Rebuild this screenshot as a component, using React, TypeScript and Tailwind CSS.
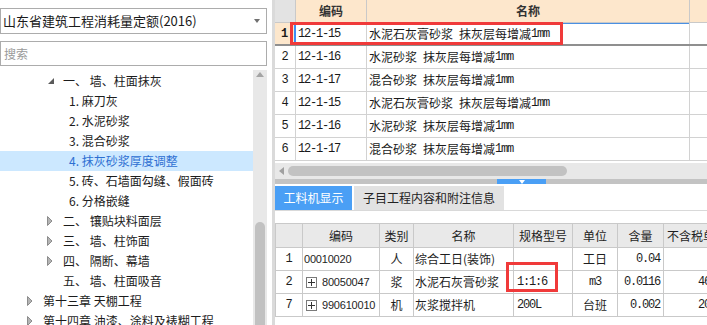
import React from 'react';

const CJK = "font-['Noto_Sans_CJK_SC',sans-serif]";
const MONO = "font-['Liberation_Mono','Noto_Sans_CJK_SC',monospace] text-[12px] tracking-[-1.2px]";

type TreeNode = { label: string; level: 0 | 1 | 2; caret?: 'open' | 'closed'; selected?: boolean };

const tree: TreeNode[] = [
  { label: '一、 墙、柱面抹灰', level: 1, caret: 'open' },
  { label: '1. 麻刀灰', level: 2 },
  { label: '2. 水泥砂浆', level: 2 },
  { label: '3. 混合砂浆', level: 2 },
  { label: '4. 抹灰砂浆厚度调整', level: 2, selected: true },
  { label: '5. 砖、石墙面勾缝、假面砖', level: 2 },
  { label: '6. 分格嵌缝', level: 2 },
  { label: '二、 镶贴块料面层', level: 1, caret: 'closed' },
  { label: '三、 墙、柱饰面', level: 1, caret: 'closed' },
  { label: '四、 隔断、幕墙', level: 1, caret: 'closed' },
  { label: '五、 墙、柱面吸音', level: 1 },
  { label: '第十三章 天棚工程', level: 0, caret: 'closed' },
  { label: '第十四章 油漆、涂料及裱糊工程', level: 0, caret: 'closed' },
];

const indent = ['pl-[29px]', 'pl-[49px]', 'pl-[69px]'];

const quotaRows = [
  { no: '1', code: '12-1-15', name: '水泥石灰膏砂浆', active: true },
  { no: '2', code: '12-1-16', name: '水泥砂浆' },
  { no: '3', code: '12-1-17', name: '混合砂浆' },
  { no: '4', code: '12-1-15', name: '水泥石灰膏砂浆' },
  { no: '5', code: '12-1-16', name: '水泥砂浆' },
  { no: '6', code: '12-1-17', name: '混合砂浆' },
];

const materialRows = [
  { no: '1', code: '00010020', expand: false, kind: '人', name: '综合工日(装饰)', spec: '', unit: '工日', mono: false, qty: '0.04', price: '' },
  { no: '2', code: '80050047', expand: true, kind: '浆', name: '水泥石灰膏砂浆', spec: '1:1:6', unit: 'm3', mono: true, qty: '0.0116', price: '46.80' },
  { no: '7', code: '990610010', expand: true, kind: '机', name: '灰浆搅拌机', spec: '200L', unit: '台班', mono: false, qty: '0.002', price: '20.16' },
];

function Caret({ kind }: { kind?: 'open' | 'closed' }) {
  return (
    <span className="w-[14px] h-full flex items-center shrink-0">
      {kind === 'open' && (
        <svg width="6" height="6" viewBox="0 0 6 6" className="-ml-px">
          <path d="M6 0V6H0Z" fill="#5a5a5a" />
        </svg>
      )}
      {kind === 'closed' && (
        <svg width="6" height="10" viewBox="0 0 6 10" className="-ml-[2px]">
          <path d="M0.5 0.5L5 5L0.5 9.5Z" fill="#b4b4b4" stroke="#8c8c8c" strokeWidth="1" />
        </svg>
      )}
    </span>
  );
}

function LeftPanel() {
  return (
    <div className={`w-[267px] h-full flex flex-col pt-[8px] shrink-0 ${CJK}`}>
      <div className="h-[26px] border border-[#acacac] flex items-center justify-between pl-[2px] pr-[6px] text-[13px] text-[#1a1a1a]">
        <span>山东省建筑工程消耗量定额(2016)</span>
        <svg width="6" height="4" viewBox="0 0 6 4">
          <path d="M0 0H6L3 4Z" fill="#707070" />
        </svg>
      </div>
      <div className="mt-[7px] h-[25px] border border-[#acacac] flex items-center pl-[3px] text-[12px] text-[#9a9a9a]">
        搜索
      </div>
      <div className="mt-[4px] flex-1 flex min-h-0">
        <div className="flex-1 pt-px overflow-hidden">
          {tree.map((n) => (
            <div
              key={n.label}
              className={`h-[20px] flex items-center text-[12px] leading-none ${indent[n.level]} ${
                n.selected ? 'bg-[#cce8ff] text-[#2d6fd2]' : 'text-[#1c1c1c]'
              }`}
            >
              {n.level < 2 && <Caret kind={n.caret} />}
              <span className="whitespace-nowrap">{n.label}</span>
            </div>
          ))}
        </div>
        <div className="w-[14px] bg-[#e8e8e8] flex flex-col items-center">
          <svg width="8" height="5" viewBox="0 0 8 5" className="mt-[2px]">
            <path d="M0 5L4 0L8 5Z" fill="#a4a4a4" />
          </svg>
          <div className="mt-auto w-[10px] h-[103px] bg-[#c1c1c1] rounded-t-[5px]" />
        </div>
      </div>
    </div>
  );
}

function QuotaTable() {
  return (
    <div className={`${CJK} text-[12px] text-[#1a1a1a]`}>
      <div className="h-[23px] flex border-b border-[#c9c9c9] font-bold text-[#333]">
        <div className="w-[21px] shrink-0 bg-[#e3e3e3] border-r border-[#c9c9c9]" />
        <div className="w-[71px] shrink-0 bg-[#fde7cc] border-r border-[#c9c9c9] flex items-center justify-center">编码</div>
        <div className="w-[323px] shrink-0 bg-[#fde7cc] border-r border-[#c9c9c9] flex items-center justify-center">名称</div>
        <div className="flex-1 bg-[#fde7cc]" />
      </div>
      {quotaRows.map((r) => (
        <div
          key={r.no}
          className={`flex ${r.active ? 'h-[23px] border-b-2 border-[#8f8f8f]' : 'h-[23px] border-b border-[#d2d2d2]'}`}
        >
          <div
            className={`w-[21px] shrink-0 border-r border-[#d2d2d2] flex items-center justify-center font-['Liberation_Mono',monospace] text-[12px] ${
              r.active ? 'bg-[#fde7cc] font-bold border-r-[#3d8ef5] border-r-2' : ''
            }`}
          >
            {r.no}
          </div>
          <div
            className={`w-[71px] shrink-0 border-r border-[#d2d2d2] flex items-center pl-[2px] ${r.active ? 'shadow-[inset_0_1px_0_#4a90e2]' : ''}`}
          >
            <span className={MONO}>{r.code}</span>
          </div>
          <div
            className={`w-[323px] shrink-0 border-r border-[#d2d2d2] flex items-center pl-[2px] whitespace-nowrap ${
              r.active ? 'shadow-[inset_0_1px_0_#4a90e2]' : ''
            }`}
          >
            <span>{r.name}</span>
            <span className="w-[6px]" />
            <span>抹灰层每增减</span>
            <span className={MONO}>1mm</span>
          </div>
          <div className="flex-1" />
        </div>
      ))}
      <div className="h-[2px]" />
      <div className="h-[16px] bg-[#e8e8e8] flex items-center">
        <svg width="5" height="8" viewBox="0 0 5 8" className="ml-[4px]">
          <path d="M5 0V8L0 4Z" fill="#a0a0a0" />
        </svg>
        <div className="ml-[4px] w-[279px] h-[10px] rounded-full bg-[#c2c2c2]" />
      </div>
    </div>
  );
}

function MaterialTable() {
  const cell = 'shrink-0 border-r border-b border-[#c9c9c9] flex items-center';
  return (
    <div className={`border-t border-l border-[#c9c9c9] ${CJK} text-[12px] text-[#1e1e1e]`}>
      <div className="h-[24px] flex bg-[#e9e9e9]">
        <div className={`w-[27px] ${cell}`} />
        <div className={`w-[77px] ${cell} justify-center`}>编码</div>
        <div className={`w-[34px] ${cell} justify-center`}>类别</div>
        <div className={`w-[100px] ${cell} justify-center`}>名称</div>
        <div className={`w-[59px] ${cell} justify-center`}>规格型号</div>
        <div className={`w-[45px] ${cell} justify-center`}>单位</div>
        <div className={`w-[46px] ${cell} justify-center`}>含量</div>
        <div className={`w-[90px] ${cell} pl-[3px] whitespace-nowrap`}>不含税单价</div>
      </div>
      {materialRows.map((r) => (
        <div key={r.no} className="h-[23px] flex bg-white">
          <div className={`w-[27px] ${cell} justify-center font-['Liberation_Mono',monospace] text-[12px]`}>{r.no}</div>
          <div
            className={`w-[77px] ${cell} whitespace-nowrap font-['Liberation_Sans',sans-serif] text-[11px] tracking-[-0.2px] ${
              r.expand ? 'pl-[3px]' : 'pl-px'
            }`}
          >
            {r.expand && (
              <span className="w-[11px] h-[11px] border border-[#7a7a7a] flex items-center justify-center mr-[5px] shrink-0">
                <svg width="7" height="7" viewBox="0 0 7 7">
                  <path d="M0 3.5H7M3.5 0V7" stroke="#333" strokeWidth="1" />
                </svg>
              </span>
            )}
            {r.code}
          </div>
          <div className={`w-[34px] ${cell} justify-center`}>{r.kind}</div>
          <div className={`w-[100px] ${cell} pl-px whitespace-nowrap overflow-hidden`}>{r.name}</div>
          <div className={`w-[59px] ${cell} pl-[3px]`}>
            <span className={MONO}>{r.spec}</span>
          </div>
          <div className={`w-[45px] ${cell} justify-center`}>
            <span className={r.mono ? MONO : ''}>{r.unit}</span>
          </div>
          <div className={`w-[46px] ${cell} justify-end pr-[3px]`}>
            <span className={MONO}>{r.qty}</span>
          </div>
          <div className={`w-[90px] ${cell} pl-[34px] whitespace-nowrap`}>
            <span className={MONO}>{r.price}</span>
          </div>
        </div>
      ))}
    </div>
  );
}

export default function App() {
  return (
    <div className="w-[707px] h-[325px] overflow-hidden bg-white flex">
      <LeftPanel />
      <div className="w-[5px] shrink-0" />
      <div className="w-[3px] shrink-0 bg-[#dadada]" />
      <div className="flex-1 min-w-0 flex flex-col relative overflow-hidden">
        <QuotaTable />
        <div className="h-[5px] bg-[#c3c3c3] flex pl-[222px] shrink-0">
          <div className="w-[49px] h-full bg-[#4a9ff5] flex items-center justify-center">
            <svg width="6" height="4" viewBox="0 0 6 4">
              <path d="M0 0H6L3 4Z" fill="#ffffff" />
            </svg>
          </div>
        </div>
        <div className={`h-[27px] flex items-end gap-[2px] border-b border-[#d9d9d9] shrink-0 ${CJK} text-[12px]`}>
          <div className="w-[77px] h-[24px] bg-[#4a9ff5] text-white flex items-center justify-center">工料机显示</div>
          <div className="w-[150px] h-[24px] bg-[#e2e2e2] text-[#222] flex items-center justify-center">子目工程内容和附注信息</div>
        </div>
        <div className="h-[12px] shrink-0" />
        <MaterialTable />

        <div className="absolute left-[15px] top-[22px] w-[273px] h-[23px] border-[3px] border-[#f03a3a]" />
        <div className="absolute left-[231px] top-[262px] w-[52px] h-[30px] border-[3px] border-[#f03a3a]" />
      </div>
    </div>
  );
}
